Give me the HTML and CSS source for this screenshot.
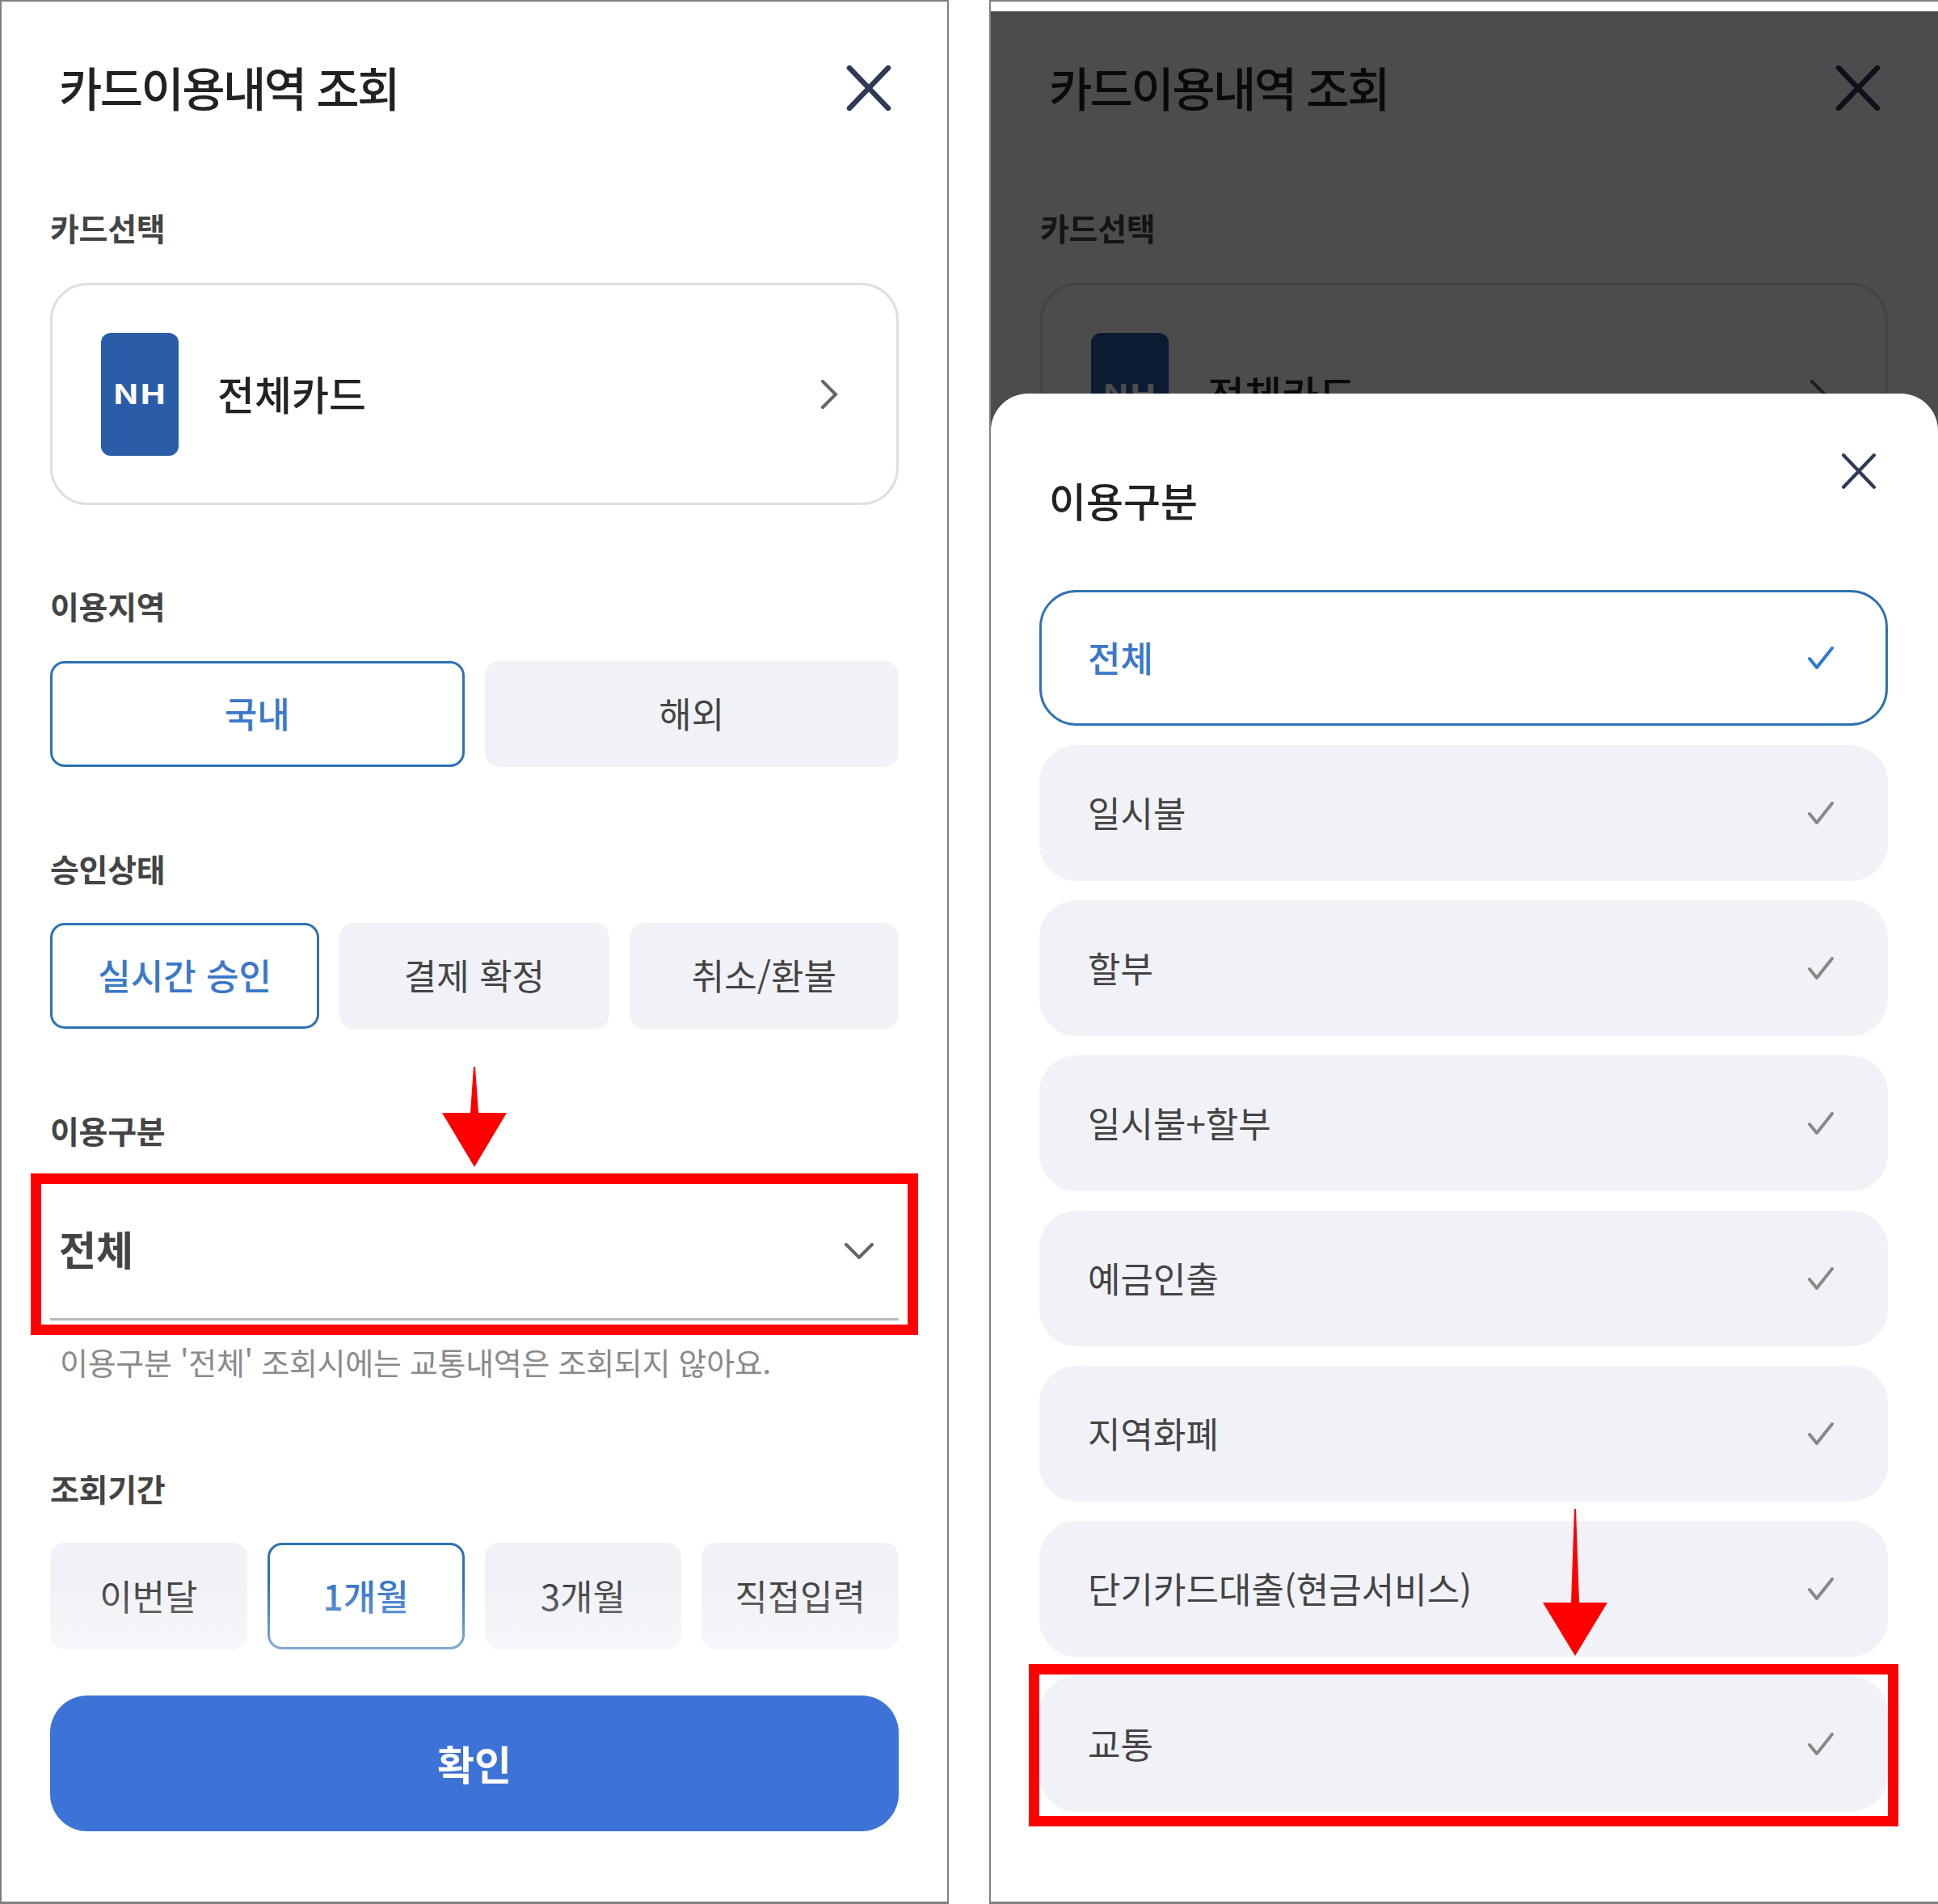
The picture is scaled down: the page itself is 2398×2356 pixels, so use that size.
FILE: index.html
```html
<!DOCTYPE html>
<html lang="ko">
<head>
  <meta charset="utf-8">
  <title>카드이용내역 조회</title>
  <link rel="stylesheet" href="styles.css">
</head>
<body>
  <!-- shared icons -->
  <svg class="sprite">
    <symbol id="ico-close" viewBox="0 0 56 56"><path d="M4 3 L52 53 M52 3 L4 53" /></symbol>
    <symbol id="ico-check" viewBox="0 0 32 28"><path d="M2 15 L11 26 L30 2" /></symbol>
    <symbol id="ico-right" viewBox="0 0 22 36"><path d="M3 2 L19 18 L3 34" /></symbol>
  </svg>

  <div class="screens">
    <!-- Left screen: search form -->
    <div class="panel">
      <div class="head">
        <h1 class="title">카드이용내역 조회</h1>
        <svg class="close"><use href="#ico-close" /></svg>
      </div>

      <div class="section section-card">
        <div class="label">카드선택</div>
        <div class="card">
          <div class="logo"><span>NH</span></div>
          <div class="card-name">전체카드</div>
          <svg class="chevron"><use href="#ico-right" /></svg>
        </div>
      </div>

      <div class="section section-region">
        <div class="label">이용지역</div>
        <div class="options">
          <div class="option active">국내</div>
          <div class="option">해외</div>
        </div>
      </div>

      <div class="section section-status">
        <div class="label">승인상태</div>
        <div class="options">
          <div class="option active">실시간 승인</div>
          <div class="option">결제 확정</div>
          <div class="option">취소/환불</div>
        </div>
      </div>

      <div class="section section-type">
        <div class="label">이용구분</div>
        <div class="field">
          <span class="field-value">전체</span>
          <svg class="caret" viewBox="0 0 36 20"><path d="M2 2 L18 18 L34 2" /></svg>
        </div>
        <p class="hint">이용구분 '전체' 조회시에는 교통내역은 조회되지 않아요.</p>
      </div>

      <div class="section section-period">
        <div class="label">조회기간</div>
        <div class="options">
          <div class="option">이번달</div>
          <div class="option active">1개월</div>
          <div class="option">3개월</div>
          <div class="option">직접입력</div>
        </div>
      </div>

      <button class="confirm">확인</button>

      <div class="fade"></div>

      <!-- annotations -->
      <svg class="arrow arrow-field" viewBox="0 0 80 124"><path d="M39 0 L41 0 L45 57 L80 57 L40 124 L0 57 L35 57 Z" /></svg>
      <div class="mark mark-field"></div>
    </div>

    <!-- Right screen: type sheet over the dimmed form -->
    <div class="panel panel-right">
      <div class="head">
        <div class="title">카드이용내역 조회</div>
        <svg class="close"><use href="#ico-close" /></svg>
      </div>
      <div class="section section-card">
        <div class="label">카드선택</div>
        <div class="card">
          <div class="logo"><span>NH</span></div>
          <div class="card-name">전체카드</div>
          <svg class="chevron"><use href="#ico-right" /></svg>
        </div>
      </div>

      <div class="scrim"></div>

      <div class="sheet">
        <div class="sheet-head">
          <h2 class="sheet-title">이용구분</h2>
          <svg class="sheet-close"><use href="#ico-close" /></svg>
        </div>
        <ul class="type-list">
          <li class="type-item selected">전체<svg class="check"><use href="#ico-check" /></svg></li>
          <li class="type-item">일시불<svg class="check"><use href="#ico-check" /></svg></li>
          <li class="type-item">할부<svg class="check"><use href="#ico-check" /></svg></li>
          <li class="type-item">일시불+할부<svg class="check"><use href="#ico-check" /></svg></li>
          <li class="type-item">예금인출<svg class="check"><use href="#ico-check" /></svg></li>
          <li class="type-item">지역화폐<svg class="check"><use href="#ico-check" /></svg></li>
          <li class="type-item">단기카드대출(현금서비스)<svg class="check"><use href="#ico-check" /></svg></li>
          <li class="type-item">교통<svg class="check"><use href="#ico-check" /></svg></li>
        </ul>
      </div>

      <!-- annotations -->
      <svg class="arrow arrow-item" viewBox="0 0 80 182"><path d="M39 0 L41 0 L45 116 L80 116 L40 182 L0 116 L35 116 Z" /></svg>
      <div class="mark mark-item"></div>
    </div>
  </div>
</body>
</html>
```

FILE: styles.css
```css
/* Page */
body {
  margin: 0;
  background-color: #fff;
  font-family: "Noto Sans CJK KR", "Noto Sans", sans-serif;
  color: #222;
}

.sprite {
  display: none;
}

.screens {
  display: flex;
  gap: 50px;
  height: 2356px;
}

/* Screens */
.panel {
  position: relative;
  box-sizing: border-box;
  width: 1174px;
  height: 2356px;
  padding: 0 60px;
  background-color: #fff;
  border: solid #808080;
  border-width: 2px 2px 3px;
  overflow: hidden;
}

.panel-right {
  padding: 0 62px 0 61px;
  border-right: none;
}

.head {
  display: flex;
  justify-content: space-between;
  align-items: center;
  height: 210px;
  padding: 0 9px 0 11px;
}

.title {
  margin: 0;
  font-size: 58px;
  font-weight: 500;
  letter-spacing: -2.6px;
  line-height: 80px;
  color: #222;
}

.close {
  width: 56px;
  height: 56px;
  margin-top: 4px;
  fill: none;
  stroke: #2f3a57;
  stroke-width: 6.5;
  stroke-linecap: round;
}

/* Form sections */
.section-card {
  margin-top: 39px;
}

.section-region {
  margin-top: 94px;
}

.section-status {
  margin-top: 95px;
}

.section-type {
  margin-top: 95px;
}

.section-period {
  margin-top: 101px;
}

.label {
  height: 60px;
  margin-bottom: 38px;
  font-size: 39px;
  font-weight: 700;
  letter-spacing: -0.3px;
  line-height: 60px;
  color: #444;
}

.section-card .label {
  margin-bottom: 39px;
}

.section-region .label {
  margin-bottom: 39px;
}

.section-type .label {
  margin-bottom: 31px;
}

/* Card selector */
.card {
  box-sizing: border-box;
  display: flex;
  align-items: center;
  height: 275px;
  padding: 0 72px 0 60px;
  border: 3px solid #dedede;
  border-radius: 46px;
}

.logo {
  display: flex;
  align-items: center;
  justify-content: center;
  box-sizing: border-box;
  width: 96px;
  height: 152px;
  padding-bottom: 4px;
  margin-right: 48px;
  background-color: #2a5ca8;
  border-radius: 12px;
  color: #fff;
  font-size: 34px;
  font-weight: 700;
}

.logo span {
  display: inline-block;
  transform: scaleX(1.3);
}

.card-name {
  flex: 1;
  padding-bottom: 3px;
  font-size: 50px;
  font-weight: 500;
  color: #222;
}

.chevron {
  width: 22px;
  height: 36px;
  fill: none;
  stroke: #666;
  stroke-width: 4;
  stroke-linecap: round;
}

/* Option buttons */
.options {
  display: grid;
  grid-auto-flow: column;
  grid-auto-columns: 1fr;
  gap: 25px;
}

.option {
  box-sizing: border-box;
  display: flex;
  align-items: center;
  justify-content: center;
  height: 131px;
  padding-bottom: 3px;
  background-color: #f1f2f7;
  border-radius: 18px;
  font-size: 44px;
  color: #444;
}

.option.active {
  background-color: #fff;
  border: 3px solid #2e72b4;
  font-weight: 500;
  color: #3a78c9;
}

.section-period .option {
  height: 132px;
}

/* Select field */
.field {
  box-sizing: border-box;
  display: flex;
  justify-content: space-between;
  align-items: center;
  height: 175px;
  padding: 0 31px 0 11px;
  border-bottom: 3px solid #bbb;
}

.field-value {
  padding-bottom: 3px;
  font-size: 50px;
  font-weight: 700;
  color: #444;
}

.caret {
  width: 36px;
  height: 20px;
  margin-top: 6px;
  fill: none;
  stroke: #666;
  stroke-width: 4;
  stroke-linecap: round;
}

.hint {
  margin: 26px 0 0;
  padding-left: 12px;
  font-size: 38px;
  letter-spacing: -0.3px;
  line-height: 50px;
  color: #8a8a8a;
}

/* Confirm button */
.confirm {
  position: relative;
  display: block;
  width: 100%;
  height: 168px;
  padding-bottom: 3px;
  margin-top: 57px;
  background-color: #3d72d6;
  border: none;
  border-radius: 46px;
  font-family: inherit;
  font-size: 50px;
  font-weight: 700;
  color: #fff;
}

.fade {
  position: absolute;
  left: 0;
  right: 0;
  top: 1960px;
  height: 136px;
  background: linear-gradient(rgba(255, 255, 255, 0), rgba(255, 255, 255, 0.7));
}

/* Bottom sheet */
.scrim {
  position: absolute;
  top: 12px;
  left: 0;
  right: 0;
  bottom: 0;
  background-color: rgba(0, 0, 0, 0.7);
}

.sheet {
  position: absolute;
  top: 485px;
  left: 0;
  right: 0;
  bottom: 0;
  box-sizing: border-box;
  padding: 0 62px 0 60px;
  background-color: #fff;
  border-radius: 46px 46px 0 0;
}

.sheet-head {
  display: flex;
  justify-content: space-between;
  align-items: flex-start;
  height: 243px;
}

.sheet-title {
  margin: 101px 0 0 12px;
  font-size: 50px;
  font-weight: 500;
  line-height: 60px;
  color: #222;
}

.sheet-close {
  width: 44px;
  height: 44px;
  margin: 74px 14px 0 0;
  fill: none;
  stroke: #2f3a57;
  stroke-width: 5.5;
  stroke-linecap: round;
}

.type-list {
  display: flex;
  flex-direction: column;
  gap: 24px;
  margin: 0;
  padding: 0;
  list-style-type: none;
}

.type-item {
  box-sizing: border-box;
  display: flex;
  justify-content: space-between;
  align-items: center;
  height: 168px;
  padding: 0 67px 2px 60px;
  background-color: #f1f2f8;
  border-radius: 46px;
  font-size: 44px;
  color: #444;
}

.type-item.selected {
  padding: 0 64px 2px 57px;
  background-color: #fff;
  border: 3px solid #2e72b4;
  font-weight: 500;
  color: #3a78c9;
}

.check {
  width: 32px;
  height: 28px;
  margin-top: 2px;
  fill: none;
  stroke: #888;
  stroke-width: 4;
  stroke-linecap: round;
  stroke-linejoin: round;
}

.selected .check {
  stroke: #2e7ad0;
}

/* Red annotations */
.arrow {
  position: absolute;
  fill: #ff0000;
}

.arrow-field {
  left: 545px;
  top: 1318px;
  width: 80px;
  height: 124px;
}

.arrow-item {
  left: 683px;
  top: 1865px;
  width: 80px;
  height: 182px;
}

.mark {
  position: absolute;
  box-sizing: border-box;
  border: 13px solid #ff0000;
}

.mark-field {
  left: 36px;
  top: 1450px;
  width: 1098px;
  height: 200px;
}

.mark-item {
  left: 47px;
  top: 2057px;
  width: 1076px;
  height: 201px;
}
```
